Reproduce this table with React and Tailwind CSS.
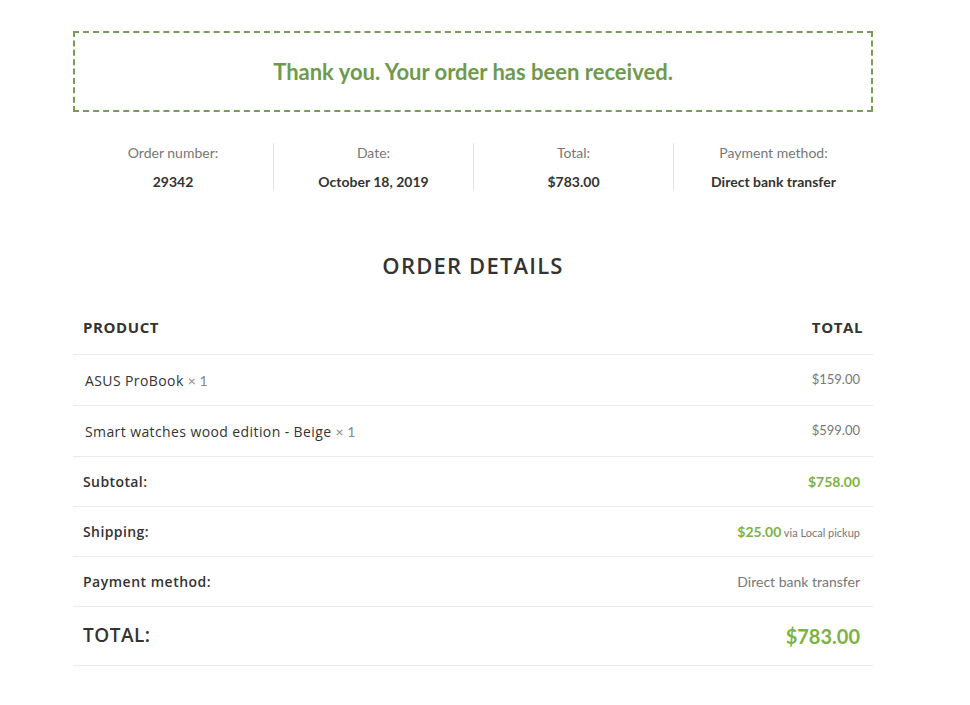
const head = "font-['Open_Sans',sans-serif]"
const body = "font-['Lato',sans-serif]"

const overview = [
  { label: 'Order number:', value: '29342' },
  { label: 'Date:', value: 'October 18, 2019' },
  { label: 'Total:', value: '$783.00' },
  { label: 'Payment method:', value: 'Direct bank transfer' },
]

const items = [
  { name: 'ASUS ProBook', qty: 1, price: '$159.00' },
  { name: 'Smart watches wood edition - Beige', qty: 1, price: '$599.00' },
]

export default function App() {
  return (
    <div className={`min-h-screen bg-white ${body}`}>
      <div className="ml-[73px] w-[800px] pt-[31px]">
        <div className="flex h-[81px] items-center justify-center border-2 border-dashed border-[#769c55]">
          <p className="text-[22px] font-bold text-[#6f9a4e]">Thank you. Your order has been received.</p>
        </div>

        <ul className="mt-[31px] grid grid-cols-4">
          {overview.map((o, i) => (
            <li
              key={o.label}
              className={`flex h-[47px] flex-col items-center justify-between pt-[2px] ${i > 0 ? 'border-l border-[#e6e6e6]' : ''}`}
            >
              <span className="text-[14px] leading-4 text-[#777]">{o.label}</span>
              <span className="text-[14px] font-bold leading-4 text-[#333]">{o.value}</span>
            </li>
          ))}
        </ul>

        <h2 className={`${head} mt-[59px] text-center text-[22px] font-semibold leading-8 tracking-[1.2px] text-[#333]`}>
          ORDER DETAILS
        </h2>

        <table className="mt-[19px] w-full border-collapse">
          <thead>
            <tr className={`${head} border-b border-[#ebebeb] text-[15px] font-semibold tracking-[0.6px] text-[#333]`}>
              <th className="h-[54px] px-[10px] text-left">PRODUCT</th>
              <th className="h-[54px] px-[10px] text-right">TOTAL</th>
            </tr>
          </thead>
          <tbody>
            {items.map((it) => (
              <tr key={it.name} className="border-b border-[#ebebeb]">
                <td className={`${head} h-[51px] px-3 pt-[1px] text-[14px] tracking-[0.4px] text-[#333]`}>
                  {it.name} <span className={`${body} text-[14px] tracking-normal text-[#888]`}>× {it.qty}</span>
                </td>
                <td className="h-[51px] px-[13px] text-right text-[13px] text-[#777]">{it.price}</td>
              </tr>
            ))}
          </tbody>
          <tfoot>
            <tr className="border-b border-[#ebebeb]">
              <th className={`${head} h-[50px] px-[10px] text-left text-[14px] font-semibold tracking-[0.4px] text-[#333]`}>Subtotal:</th>
              <td className="h-[50px] px-[13px] text-right text-[14px] font-bold text-[#7cb342]">$758.00</td>
            </tr>
            <tr className="border-b border-[#ebebeb]">
              <th className={`${head} h-[50px] px-[10px] text-left text-[14px] font-semibold tracking-[0.4px] text-[#333]`}>Shipping:</th>
              <td className="h-[50px] px-[13px] text-right">
                <span className="text-[14px] font-bold text-[#7cb342]">$25.00</span>
                <span className="text-[11px] text-[#777]"> via Local pickup</span>
              </td>
            </tr>
            <tr className="border-b border-[#ebebeb]">
              <th className={`${head} h-[50px] px-[10px] text-left text-[14px] font-semibold tracking-[0.5px] text-[#333]`}>Payment method:</th>
              <td className="h-[50px] px-[13px] text-right text-[14px] text-[#777]">Direct bank transfer</td>
            </tr>
            <tr className="border-b border-[#ebebeb]">
              <th className={`${head} h-[59px] px-[10px] text-left text-[19px] font-semibold tracking-[0.5px] text-[#333]`}>TOTAL:</th>
              <td className="h-[59px] px-[13px] text-right text-[20px] font-bold text-[#7cb342]">$783.00</td>
            </tr>
          </tfoot>
        </table>
      </div>
    </div>
  )
}
